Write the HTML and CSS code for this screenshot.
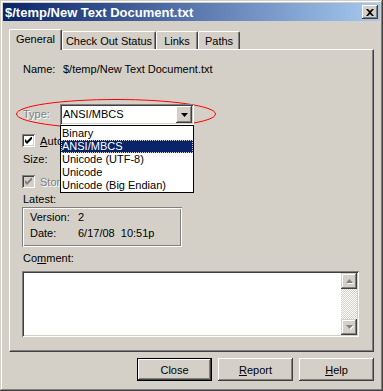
FILE: index.html
```html
<!DOCTYPE html>
<html lang="en">
<head>
    <meta charset="UTF-8">
    <title>Properties</title>
    <link rel="stylesheet" href="styles.css">
</head>
<body>
<div class="window">
    <div class="titlebar">
        <span class="title">$/temp/New Text Document.txt</span>
        <span class="caption-btn">
            <svg width="8" height="7" viewBox="0 0 8 7"><path d="M0 0h2l2 2 2-2h2L5 3.5 8 7H6L4 5 2 7H0l3-3.5z" fill="#000"/></svg>
        </span>
    </div>

    <div class="client">
        <div class="tabs">
            <div class="tab tab-general active">General</div>
            <div class="tab tab-checkout">Check Out Status</div>
            <div class="tab tab-links">Links</div>
            <div class="tab tab-paths">Paths</div>
        </div>

        <div class="panel">
            <!-- red marker drawn round the Type field -->
            <svg class="marker" width="202" height="34" viewBox="0 0 202 34">
                <ellipse cx="100" cy="16" rx="99.5" ry="14.5" fill="none" stroke="#ff0000" stroke-width="1"/>
            </svg>

            <div class="row name-row">
                <span class="label label-name">Name:</span>
                <span>$/temp/New Text Document.txt</span>
            </div>

            <div class="row type-row">
                <span class="label label-type disabled">Type:</span>
                <div class="combo">
                    <span class="combo-text">ANSI/MBCS</span>
                    <span class="combo-btn">
                        <svg width="7" height="4" viewBox="0 0 7 4"><path d="M0 0h7L3.5 4z" fill="#000"/></svg>
                    </span>
                    <div class="droplist">
                        <div class="item first">Binary</div>
                        <div class="item selected">ANSI/MBCS</div>
                        <div class="item">Unicode (UTF-8)</div>
                        <div class="item">Unicode</div>
                        <div class="item">Unicode (Big Endian)</div>
                    </div>
                </div>
            </div>

            <div class="check-row auto-row">
                <span class="checkbox"><svg width="7" height="7" viewBox="0 0 7 7"><path d="M0 2l2 2 5-5v3l-5 5-2-2z" fill="#000"/></svg></span>
                <span class="check-label auto-label"><u>A</u>uto-detect encoding on save</span>
            </div>

            <div class="row size-row">
                <span class="label">Size:</span>
            </div>

            <div class="check-row store-row disabled">
                <span class="checkbox"><svg width="7" height="7" viewBox="0 0 7 7"><path d="M0 2l2 2 5-5v3l-5 5-2-2z" fill="#808080"/></svg></span>
                <span class="check-label">Store only latest version</span>
            </div>

            <div class="caption latest-caption">Latest:</div>
            <div class="groupbox">
                <div class="group-row"><span class="group-label">Version:</span><span>2</span></div>
                <div class="group-row"><span class="group-label">Date:</span><span>6/17/08&nbsp;&nbsp;10:51p</span></div>
            </div>

            <div class="caption comment-caption">Co<u>m</u>ment:</div>
            <div class="textbox">
                <div class="scrollbar">
                    <span class="scroll-btn"><svg width="7" height="4" viewBox="0 0 7 4"><path d="M3.5 0L7 4H0z" fill="#808080"/></svg></span>
                    <span class="scroll-track"></span>
                    <span class="scroll-btn"><svg width="7" height="4" viewBox="0 0 7 4"><path d="M0 0h7L3.5 4z" fill="#808080"/></svg></span>
                </div>
            </div>
        </div>

        <div class="buttons">
            <span class="button default"><span class="button-face">Close</span></span>
            <span class="button"><span class="button-face"><u>R</u>eport</span></span>
            <span class="button"><span class="button-face"><u>H</u>elp</span></span>
        </div>
    </div>
</div>
</body>
</html>
```

FILE: styles.css
```css
body {
    margin: 0;
    background: #d4d0c8;
    font-family: "Liberation Sans", Arial, sans-serif;
    font-size: 11px;
    color: #000;
}

.window {
    width: 383px;
    height: 391px;
    box-sizing: border-box;
    padding: 3px 3px 0 3px;
    background: #d4d0c8;
    box-shadow: inset -1px -1px #404040, inset 1px 1px #d4d0c8, inset -2px -2px #808080, inset 2px 2px #fff;
}

/* title bar */
.titlebar {
    height: 18px;
    display: flex;
    align-items: center;
    justify-content: space-between;
    padding: 0 2px;
    background: linear-gradient(to right, #0a246a, #a6caf0);
}

.title {
    color: #fff;
    font-weight: bold;
    font-size: 13px;
}

.caption-btn {
    width: 16px;
    height: 14px;
    box-sizing: border-box;
    display: flex;
    align-items: center;
    justify-content: center;
    background: #d4d0c8;
    box-shadow: inset -1px -1px #404040, inset 1px 1px #fff, inset -2px -2px #808080;
}

/* client area */
.client {
    padding: 8px 6px 0 6px;
}

.tabs {
    display: flex;
    align-items: flex-end;
    height: 20px;
    position: relative;
    z-index: 2;
}

.tab {
    height: 18px;
    box-sizing: border-box;
    padding-top: 3px;
    text-align: center;
    border-top: 1px solid #fff;
    border-left: 1px solid #fff;
    border-right: 1px solid #404040;
    border-radius: 2px 2px 0 0;
    box-shadow: inset -1px 0 #808080;
}

.tab.active {
    height: 21px;
    margin-bottom: -1px;
    background: #d4d0c8;
    padding-top: 3px;
}

.tab-general {
    width: 53px;
}

.tab-checkout {
    width: 94px;
}

.tab-links {
    width: 42px;
}

.tab-paths {
    width: 42px;
}

.panel {
    position: relative;
    height: 303px;
    box-sizing: border-box;
    padding: 13px 0 0 13px;
    border-top: 1px solid #fff;
    border-left: 1px solid #fff;
    border-right: 1px solid #404040;
    border-bottom: 1px solid #404040;
    box-shadow: inset -1px -1px #808080;
}

.marker {
    position: absolute;
    left: 6px;
    top: 48px;
    z-index: 0;
}

.row {
    display: flex;
    align-items: center;
    line-height: 13px;
}

.label-name {
    width: 40px;
}

.label-type {
    width: 37px;
}

.disabled,
.disabled .check-label {
    color: #808080;
    text-shadow: 1px 1px #fff;
}

.type-row {
    margin-top: 28px;
    height: 21px;
}

/* combo box with its open list */
.combo {
    position: relative;
    z-index: 1;
    width: 134px;
    height: 21px;
    box-sizing: border-box;
    display: flex;
    align-items: center;
    justify-content: space-between;
    padding: 2px 2px 2px 3px;
    background: #fff;
    box-shadow: inset 1px 1px #808080, inset -1px -1px #fff, inset 2px 2px #404040, inset -2px -2px #d4d0c8;
}

.combo-btn {
    width: 16px;
    height: 17px;
    box-sizing: border-box;
    display: flex;
    align-items: center;
    justify-content: center;
    background: #d4d0c8;
    box-shadow: inset -1px -1px #404040, inset 1px 1px #fff, inset -2px -2px #808080;
}

.droplist {
    position: absolute;
    left: 0;
    top: 21px;
    width: 134px;
    height: 68px;
    box-sizing: border-box;
    border: 1px solid #000;
    background: #fff;
    overflow: hidden;
}

.item {
    height: 13px;
    line-height: 13px;
    padding-left: 1px;
    white-space: nowrap;
}

.item.first {
    margin-top: 1px;
}

.item.selected {
    background: #0a246a;
    color: #fff;
    outline: 1px dotted #d4d0c8;
    outline-offset: -1px;
}

/* check boxes */
.check-row {
    display: flex;
    align-items: center;
    height: 13px;
    margin-left: -1px;
    white-space: nowrap;
}

.auto-row {
    margin-top: 9px;
}

.auto-label {
    letter-spacing: 0.15px;
}

.store-row {
    margin-top: 9px;
}

.checkbox {
    width: 13px;
    height: 13px;
    box-sizing: border-box;
    display: flex;
    align-items: center;
    justify-content: center;
    margin-right: 5px;
    background: #fff;
    box-shadow: inset 1px 1px #808080, inset -1px -1px #fff, inset 2px 2px #404040, inset -2px -2px #d4d0c8;
}

.disabled .checkbox {
    background: #d4d0c8;
}

.size-row {
    margin-top: 6px;
}

.caption {
    line-height: 13px;
}

.latest-caption {
    margin-top: 5px;
}

.groupbox {
    width: 160px;
    height: 40px;
    box-sizing: border-box;
    margin: 1px 0 0 -1px;
    padding: 4px 0 0 8px;
    box-shadow: inset 1px 1px #808080, inset -1px -1px #fff, inset 2px 2px #fff, inset -2px -2px #808080;
}

.group-row {
    display: flex;
    line-height: 13px;
    margin-bottom: 3px;
}

.group-label {
    width: 48px;
}

.comment-caption {
    margin-top: 5px;
}

.textbox {
    width: 337px;
    height: 66px;
    box-sizing: border-box;
    margin: 6px 0 0 -1px;
    padding: 2px;
    display: flex;
    justify-content: flex-end;
    background: #fff;
    box-shadow: inset 1px 1px #808080, inset -1px -1px #fff, inset 2px 2px #404040, inset -2px -2px #d4d0c8;
}

.scrollbar {
    width: 16px;
    display: flex;
    flex-direction: column;
}

.scroll-btn {
    width: 16px;
    height: 16px;
    box-sizing: border-box;
    display: flex;
    align-items: center;
    justify-content: center;
    background: #d4d0c8;
    box-shadow: inset -1px -1px #404040, inset 1px 1px #d4d0c8, inset -2px -2px #808080, inset 2px 2px #fff;
}

.scroll-btn svg {
    filter: drop-shadow(1px 1px 0 #fff);
}

.scroll-track {
    flex: 1;
    background-color: #fff;
    background-image: conic-gradient(#d4d0c8 25%, #fff 0 50%, #d4d0c8 0 75%, #fff 0);
    background-size: 2px 2px;
}

/* bottom buttons */
.buttons {
    display: flex;
    justify-content: flex-end;
    gap: 6px;
    margin-top: 6px;
}

.button {
    width: 75px;
    height: 23px;
    box-sizing: border-box;
    display: flex;
    background: #d4d0c8;
    box-shadow: inset -1px -1px #404040, inset 1px 1px #fff, inset -2px -2px #808080, inset 2px 2px #d4d0c8;
}

.button-face {
    flex: 1;
    display: flex;
    align-items: center;
    justify-content: center;
}

.button.default {
    border: 1px solid #000;
    box-shadow: inset -1px -1px #404040, inset 1px 1px #fff, inset -2px -2px #808080;
}
```
